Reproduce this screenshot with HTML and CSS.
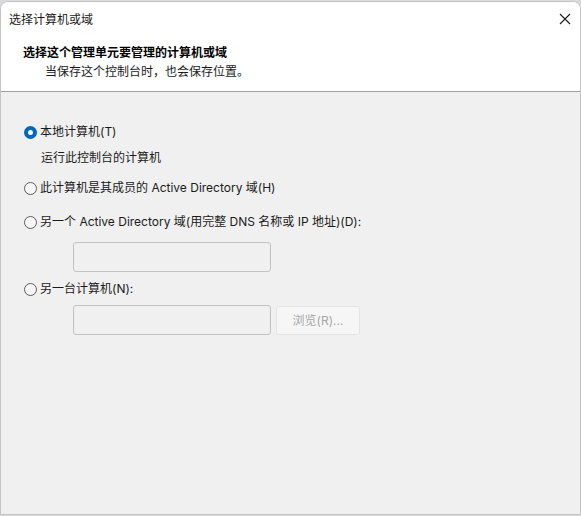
FILE: index.html
```html
<!DOCTYPE html>
<html lang="zh-CN">
<head>
<meta charset="utf-8">
<title>选择计算机或域</title>
<link rel="stylesheet" href="styles.css">
</head>
<body>
<div class="window">
  <div class="titlebar">
    <span class="title">选择计算机或域</span>
    <span class="close" aria-label="关闭">
      <svg width="12" height="12" viewBox="0 0 12 12"><path d="M1 1L11 11M11 1L1 11" stroke="#1a1a1a" stroke-width="1.1" fill="none"/></svg>
    </span>
  </div>
  <div class="header">
    <div class="h-title">选择这个管理单元要管理的计算机或域</div>
    <div class="h-sub">当保存这个控制台时，也会保存位置。</div>
  </div>
  <div class="content">
    <div class="row r1"><span class="radio checked"></span><span>本地计算机(T)</span></div>
    <div class="desc">运行此控制台的计算机</div>
    <div class="row r2"><span class="radio"></span><span>此计算机是其成员的 Active Directory 域(H)</span></div>
    <div class="row r3"><span class="radio"></span><span>另一个 Active Directory 域(用完整 DNS 名称或 IP 地址)(D):</span></div>
    <div class="field f1"><span class="input"></span></div>
    <div class="row r4"><span class="radio"></span><span>另一台计算机(N):</span></div>
    <div class="field f2"><span class="input"></span><span class="button">浏览(R)...</span></div>
  </div>
</div>
</body>
</html>
```
FILE: styles.css
```css
html, body {
  margin: 0;
  padding: 0;
  height: 100%;
}
body {
  background: #dadada;
  font-family: "Inter", "Noto Sans CJK SC", sans-serif;
  font-size: 12px;
  color: #1a1a1a;
}
.window {
  box-sizing: border-box;
  height: 514px;
  margin: 1px 0 0 0;
  border: 1px solid #c4c4c4;
  border-radius: 8px 8px 0 0;
  background: #f0f0f0;
  display: flex;
  flex-direction: column;
  overflow: hidden;
}
.titlebar {
  height: 33px;
  background: #ffffff;
  display: flex;
  align-items: center;
  justify-content: space-between;
  padding: 0 9px 0 8px;
}
.title {
  font-size: 12px;
  color: #1a1a1a;
}
.close {
  display: flex;
  width: 12px;
  height: 12px;
}
.header {
  background: #ffffff;
  padding: 8px 0 10px 22px;
  border-bottom: 1px solid #a0a0a0;
  line-height: 19px;
}
.h-title {
  font-weight: bold;
  color: #000;
}
.h-sub {
  padding-left: 22px;
  color: #1a1a1a;
}
.content {
  padding: 30px 0 0 23px;
  line-height: 20px;
}
.row {
  display: flex;
  align-items: center;
  gap: 3px;
  height: 20px;
}
.radio {
  box-sizing: border-box;
  width: 13px;
  height: 13px;
  border-radius: 50%;
  border: 1px solid #5c5c5c;
  background: #f6f6f6;
  flex: none;
}
.radio.checked {
  border: 4px solid #0067c0;
  background: #ffffff;
}
.desc {
  margin-top: 6px;
  padding-left: 17px;
}
.r2 { margin-top: 10px; }
.r3 { margin-top: 14px; }
.r4 { margin-top: 7px; }
.field {
  display: flex;
  gap: 5px;
  padding-left: 49px;
}
.f1 { margin-top: 10px; }
.f2 { margin-top: 6px; }
.input {
  box-sizing: border-box;
  width: 198px;
  height: 30px;
  border: 1px solid #c2c2c2;
  border-radius: 3px;
  background: #f0f0f0;
}
.button {
  box-sizing: border-box;
  width: 84px;
  height: 29px;
  margin-top: 1px;
  border: 1px solid #e4e4e4;
  border-radius: 3px;
  background: #f6f6f6;
  color: #a6a6a6;
  display: flex;
  align-items: center;
  justify-content: center;
}
```
